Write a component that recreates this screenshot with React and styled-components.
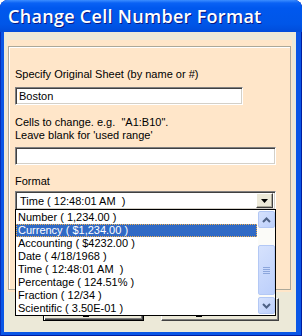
import styled, { createGlobalStyle, css } from "styled-components";

const GlobalStyle = createGlobalStyle`
    body {
        margin: 0;
        background: #ffffff;
    }
`;

const Window = styled.div`
    width: 302px;
    height: 336px;
    display: flex;
    flex-direction: column;
    background: #0a56e6;
    border-radius: 8px 8px 0 0;
    box-shadow: inset 1px 0 0 #0830b8, inset -1px 0 0 #001ea0, inset 0 -1px 0 #001ea0;
    overflow: hidden;
`;

const TitleBar = styled.div`
    height: 32px;
    flex: none;
    box-sizing: border-box;
    padding: 4px 0 0 8px;
    background: linear-gradient(180deg, #3c8eff 0px, #0a62f5 3px, #0058ee 8px, #0056e8 24px, #004cda 32px);
    color: #ffffff;
    font-family: "Open Sans", "DejaVu Sans", sans-serif;
    font-weight: 600;
    font-size: 18px;
    line-height: 24px;
    letter-spacing: 0.3px;
    text-shadow: 1px 1px 0 #0a1883;
    white-space: nowrap;
`;

const Client = styled.div`
    flex: 1;
    margin: 0 6px 4px 4px;
    padding: 8px 4px 0 3px;
    background: #ece9d8;
    display: flex;
    flex-direction: column;
    font-family: "Liberation Sans", Arial, sans-serif;
    font-size: 11px;
    color: #000000;
`;

const Panel = styled.div`
    background: #ffe6c9;
    padding: 6px 1px 2px 1px;
    height: 252px;
    box-sizing: border-box;
    display: flex;
`;

const Group = styled.div`
    flex: 1;
    border: 1px solid #aca899;
    box-shadow: inset 1px 1px 0 #ffffff;
    padding: 0 6px;
    display: flex;
    flex-direction: column;
    align-items: flex-start;
`;

const Label = styled.div`
    line-height: 13px;
    margin-top: ${p => p.$top}px;
    white-space: pre;
`;

const sunken = css`
    box-sizing: border-box;
    border: 1px solid;
    border-color: #808080 #ffffff #ffffff #808080;
    box-shadow: inset 1px 1px 0 #404040, inset -1px -1px 0 #d4d0c8;
    background: #ffffff;
`;

const TextBox = styled.div`
    ${sunken};
    width: ${p => p.$width}px;
    height: 18px;
    margin-top: ${p => p.$top}px;
    padding: 0 3px;
    line-height: 16px;
`;

const ComboWrap = styled.div`
    position: relative;
    margin-top: 3px;
    width: 261px;
`;

const Combo = styled.div`
    ${sunken};
    height: 19px;
    display: flex;
    align-items: center;
    padding: 0 2px 0 4px;
`;

const ComboText = styled.span`
    flex: 1;
    white-space: pre;
`;

const DropButton = styled.div`
    width: 17px;
    height: 15px;
    box-sizing: border-box;
    background: #ece9d8;
    border: 1px solid;
    border-color: #ffffff #404040 #404040 #ffffff;
    box-shadow: inset -1px -1px 0 #aca899;
    display: flex;
    align-items: center;
    justify-content: center;
`;

const ListBox = styled.div`
    position: absolute;
    top: 18px;
    left: 0;
    width: 261px;
    height: 107px;
    box-sizing: border-box;
    border: 1px solid #000000;
    background: #ffffff;
    display: flex;
    z-index: 5;
`;

const Items = styled.div`
    flex: 1;
    padding-top: 1px;
    display: flex;
    flex-direction: column;
`;

const Item = styled.div`
    height: 13px;
    line-height: 13px;
    padding-left: 2px;
    white-space: pre;
    color: ${p => (p.$selected ? "#ffffff" : "#000000")};
    background: ${p => (p.$selected ? "#316ac5" : "transparent")};
    outline: ${p => (p.$selected ? "1px dotted #f0b050" : "none")};
    outline-offset: -1px;
`;

const ScrollBar = styled.div`
    width: 17px;
    margin: 1px 0 1px 1px;
    background: #fbfbf8;
    display: flex;
    flex-direction: column;
`;

const ScrollButton = styled.div`
    height: 17px;
    box-sizing: border-box;
    background: linear-gradient(135deg, #d6e2fd, #bccffb);
    border: 1px solid #b3c8f5;
    border-radius: 2px;
    display: flex;
    align-items: center;
    justify-content: center;
    margin-top: ${p => p.$top || 0}px;
`;

const Thumb = styled(ScrollButton)`
    height: 50px;
    flex-direction: column;
    gap: 1px;
`;

const Grip = styled.div`
    width: 7px;
    height: 1px;
    background: #8ca6dc;
`;

const ButtonRow = styled.div`
    display: flex;
    gap: 17px;
    padding-left: 36px;
    margin-top: 6px;
`;

const Button = styled.div`
    width: ${p => p.$width}px;
    height: 23px;
    box-sizing: border-box;
    background: #ece9d8;
    border: 1px solid;
    border-color: ${p => (p.$default ? "#000000" : "#ffffff #404040 #404040 #ffffff")};
    box-shadow: ${p =>
        p.$default
            ? "inset 1px 1px 0 #ffffff, inset -1px -1px 0 #404040, inset -2px -2px 0 #808080"
            : "inset -1px -1px 0 #808080"};
    padding: 17px 0 0 ${p => p.$mark}px;
`;

/* only the accelerator underline of the caption peeks out below the list */
const AccelMark = styled.div`
    width: 6px;
    height: 1px;
    background: #000000;
`;

function Chevron({ up }) {
    return (
        <svg width="9" height="6" viewBox="0 0 9 6">
            <path
                d={up ? "M1 5 L4.5 1.5 L8 5" : "M1 1 L4.5 4.5 L8 1"}
                fill="none"
                stroke="#4d6185"
                strokeWidth="2"
            />
        </svg>
    );
}

const formats = [
    "Number ( 1,234.00 )",
    "Currency ( $1,234.00 )",
    "Accounting ( $4232.00 )",
    "Date ( 4/18/1968 )",
    "Time ( 12:48:01 AM  )",
    "Percentage ( 124.51% )",
    "Fraction ( 12/34 )",
    "Scientific ( 3.50E-01 )",
];

export default function App() {
    return (
        <>
            <GlobalStyle />
            <Window>
                <TitleBar>Change Cell Number Format</TitleBar>
                <Client>
                    <Panel>
                        <Group>
                            <Label $top={21}>Specify Original Sheet (by name or #)</Label>
                            <TextBox $width={228} $top={6}>Boston</TextBox>
                            <Label $top={11}>
                                {"Cells to change. e.g.  \"A1:B10\".\nLeave blank for 'used range'"}
                            </Label>
                            <TextBox $width={261} $top={5} />
                            <Label $top={10}>Format</Label>
                            <ComboWrap>
                                <Combo>
                                    <ComboText>Time ( 12:48:01 AM  )</ComboText>
                                    <DropButton>
                                        <svg width="7" height="4" viewBox="0 0 7 4">
                                            <path d="M0 0 H7 L3.5 4 Z" fill="#000000" />
                                        </svg>
                                    </DropButton>
                                </Combo>
                                <ListBox>
                                    <Items>
                                        {formats.map((f, i) => (
                                            <Item key={f} $selected={i === 1}>{f}</Item>
                                        ))}
                                    </Items>
                                    <ScrollBar>
                                        <ScrollButton><Chevron up /></ScrollButton>
                                        <Thumb $top={17}>
                                            <Grip /><Grip /><Grip /><Grip />
                                        </Thumb>
                                        <ScrollButton $top={2}><Chevron /></ScrollButton>
                                    </ScrollBar>
                                </ListBox>
                            </ComboWrap>
                        </Group>
                    </Panel>
                    <ButtonRow>
                        <Button $width={101} $mark={39} $default aria-label="OK"><AccelMark /></Button>
                        <Button $width={118} $mark={34} aria-label="Cancel"><AccelMark /></Button>
                    </ButtonRow>
                </Client>
            </Window>
        </>
    );
}
